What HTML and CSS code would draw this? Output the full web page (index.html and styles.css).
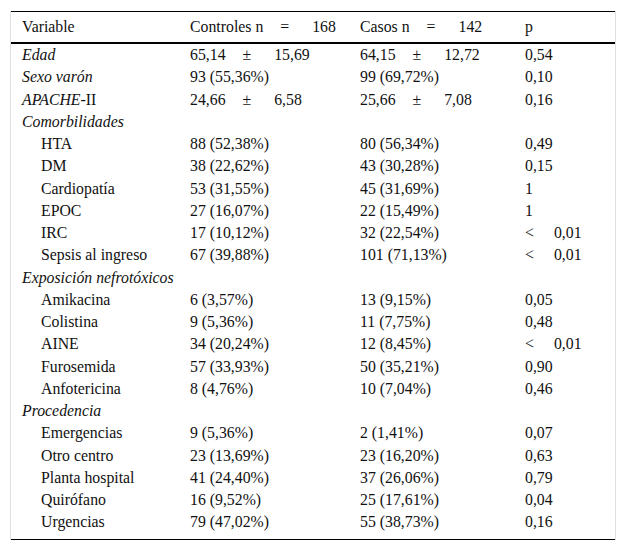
FILE: index.html
```html
<!DOCTYPE html>
<html lang="es">
<head>
<meta charset="utf-8">
<title>Tabla</title>
<link rel="stylesheet" href="styles.css">
</head>
<body>
<div class="frame">
<table class="data">
<colgroup><col class="c1"><col class="c2"><col class="c3"><col class="c4"></colgroup>
<thead>
<tr><th>Variable</th><th>Controles n<span class="eq">=</span>168</th><th>Casos n<span class="eq">=</span>142</th><th>p</th></tr>
</thead>
<tbody>
<tr><td class="it">Edad</td><td>65,14<span class="pm">±</span>15,69</td><td>64,15<span class="pm">±</span>12,72</td><td>0,54</td></tr>
<tr><td class="it">Sexo varón</td><td>93 (55,36%)</td><td>99 (69,72%)</td><td>0,10</td></tr>
<tr><td><i>APACHE</i>-II</td><td>24,66<span class="pm">±</span>6,58</td><td>25,66<span class="pm">±</span>7,08</td><td>0,16</td></tr>
<tr><td class="it">Comorbilidades</td><td></td><td></td><td></td></tr>
<tr><td class="ind">HTA</td><td>88 (52,38%)</td><td>80 (56,34%)</td><td>0,49</td></tr>
<tr><td class="ind">DM</td><td>38 (22,62%)</td><td>43 (30,28%)</td><td>0,15</td></tr>
<tr><td class="ind">Cardiopatía</td><td>53 (31,55%)</td><td>45 (31,69%)</td><td>1</td></tr>
<tr><td class="ind">EPOC</td><td>27 (16,07%)</td><td>22 (15,49%)</td><td>1</td></tr>
<tr><td class="ind">IRC</td><td>17 (10,12%)</td><td>32 (22,54%)</td><td><span class="lt">&lt;</span>0,01</td></tr>
<tr><td class="ind">Sepsis al ingreso</td><td>67 (39,88%)</td><td>101 (71,13%)</td><td><span class="lt">&lt;</span>0,01</td></tr>
<tr><td class="it">Exposición nefrotóxicos</td><td></td><td></td><td></td></tr>
<tr><td class="ind">Amikacina</td><td>6 (3,57%)</td><td>13 (9,15%)</td><td>0,05</td></tr>
<tr><td class="ind">Colistina</td><td>9 (5,36%)</td><td>11 (7,75%)</td><td>0,48</td></tr>
<tr><td class="ind">AINE</td><td>34 (20,24%)</td><td>12 (8,45%)</td><td><span class="lt">&lt;</span>0,01</td></tr>
<tr><td class="ind">Furosemida</td><td>57 (33,93%)</td><td>50 (35,21%)</td><td>0,90</td></tr>
<tr><td class="ind">Anfotericina</td><td>8 (4,76%)</td><td>10 (7,04%)</td><td>0,46</td></tr>
<tr><td class="it">Procedencia</td><td></td><td></td><td></td></tr>
<tr><td class="ind">Emergencias</td><td>9 (5,36%)</td><td>2 (1,41%)</td><td>0,07</td></tr>
<tr><td class="ind">Otro centro</td><td>23 (13,69%)</td><td>23 (16,20%)</td><td>0,63</td></tr>
<tr><td class="ind">Planta hospital</td><td>41 (24,40%)</td><td>37 (26,06%)</td><td>0,79</td></tr>
<tr><td class="ind">Quirófano</td><td>16 (9,52%)</td><td>25 (17,61%)</td><td>0,04</td></tr>
<tr class="last"><td class="ind">Urgencias</td><td>79 (47,02%)</td><td>55 (38,73%)</td><td>0,16</td></tr>
</tbody>
</table>
</div>
</body>
</html>
```
FILE: styles.css
```css
html, body {
  margin: 0;
  padding: 0;
  background: #fff;
}
body {
  font-family: "Liberation Serif", "Times New Roman", serif;
  font-size: 15.8px;
  color: #111;
}
.frame {
  margin: 11px 0 0 10px;
  width: 606px;
  border-left: 1px solid #e0e0e0;
  border-right: 1px solid #e0e0e0;
  box-sizing: border-box;
}
.data {
  width: 100%;
  border-collapse: collapse;
  table-layout: fixed;
}
.c1 { width: 179px; }
.c2 { width: 170px; }
.c3 { width: 165px; }
.c4 { width: auto; }
.data thead tr {
  border-top: 1px solid #000;
  border-bottom: 2px solid #000;
}
.data th {
  font-weight: normal;
  text-align: left;
  height: 30px;
  padding: 0;
  white-space: nowrap;
}
.data td {
  padding: 0;
  height: 22.25px;
  line-height: 18px;
  white-space: nowrap;
  vertical-align: middle;
}
.data th:first-child,
.data td:first-child {
  padding-left: 11px;
}
.data td.ind {
  padding-left: 30px;
}
.data td.it {
  font-style: italic;
}
.data tr.last td {
  padding-bottom: 5px;
}
.data tbody {
  border-bottom: 1px solid #000;
}
.eq {
  margin: 0 23px 0 17px;
}
.pm {
  margin: 0 23px 0 17px;
}
.lt {
  margin-right: 20px;
}
```
